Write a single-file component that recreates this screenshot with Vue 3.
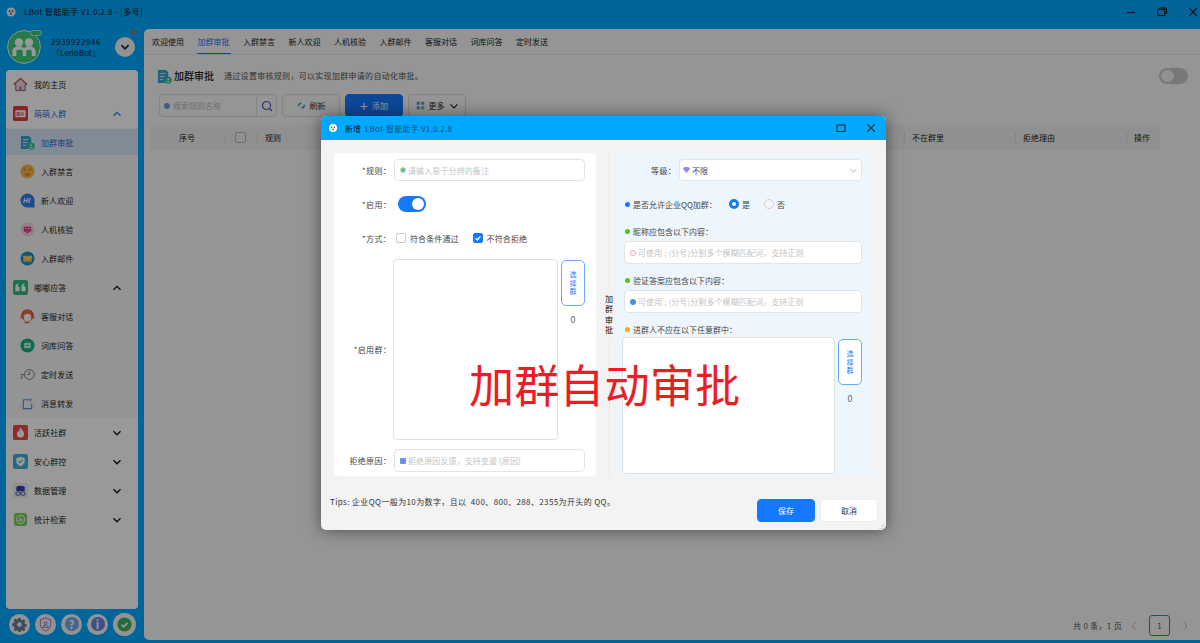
<template>
  <div class="app">
    <div class="titlebar">
      <svg class="logo" viewBox="0 0 12 12"><circle cx="6" cy="6" r="5.4" fill="#f2f2f2"/><circle cx="4.2" cy="5" r="1" fill="#444"/><circle cx="7.8" cy="5" r="1" fill="#444"/><ellipse cx="6" cy="8" rx="1" ry="1.3" fill="#444"/></svg>
      <span class="app-title">LBot 智能助手 V1.0.2.8 - [多号]</span>
      <div class="win-btns">
        <svg viewBox="0 0 10 10"><path d="M1 5.5h8" stroke="#111" stroke-width="1.2"/></svg>
        <svg viewBox="0 0 10 10" fill="none" stroke="#111"><rect x=".8" y="2.5" width="7" height="6"/><path d="M2.5 2.5V1h7v5.5H8"/></svg>
        <svg viewBox="0 0 10 10"><path d="M1.2 1.2l7.6 7.6M8.8 1.2L1.2 8.8" stroke="#111" stroke-width="1.1"/></svg>
      </div>
    </div>

    <div class="shell">
      <aside class="side">
        <div class="account">
          <div class="avatar">
            <svg viewBox="0 0 34 34"><circle cx="17" cy="17" r="16.4" fill="#3dcb7a" stroke="#e8f2f2"/><g fill="#fff"><circle cx="12" cy="12.5" r="4.2"/><circle cx="22" cy="12.5" r="4.2"/><path d="M5.5 26v-4.5c0-3.4 2.6-5 5.5-5h2c1.700 0 3 .6 4 1.600 1-1 2.300-1.600 4-1.600h2c2.900 0 5.500 1.600 5.500 5V26h-3.800v-4.500c0-1.200-.8-1.800-2-1.800h-1.500c-1.300 0-2 .7-2 1.800V26h-3.400v-4.500c0-1.200-.7-1.800-2-1.800H11.300c-1.200 0-2 .6-2 1.800V26z"/></g></svg>
            <span class="tag"></span>
          </div>
          <div class="acc-text">
            <div>2939922946</div>
            <div class="acc-name">『LerioBot』</div>
          </div>
          <button class="acc-btn">
            <svg viewBox="0 0 10 10"><path d="M2 3.500l3 3 3-3" fill="none" stroke="#222" stroke-width="1.400"/></svg>
          </button>
          <i class="red-dot"></i>
        </div>

        <nav class="menu">
          <template v-for="m in menu" :key="m.name">
            <div class="row" :class="{ sub: m.sub, active: m.active, open: m.open, bluehead: m.blue, shade: m.shade }">
              <svg class="ico" viewBox="0 0 16 16" v-html="icons[m.icon]"></svg>
              <span>{{ m.name }}</span>
              <svg v-if="m.arrow" class="arrow" viewBox="0 0 10 10"><path :d="m.arrow === 'up' ? 'M1.500 6.800L5 3.300l3.500 3.500' : 'M1.500 3.300L5 6.800l3.500-3.500'" fill="none" :stroke="m.blue ? '#2f7fe0' : '#111'" stroke-width="1.300"/></svg>
            </div>
          </template>
        </nav>

        <div class="tools">
          <span class="tool"><svg viewBox="0 0 16 16"><path fill="#6c7f9c" d="M6.800 1h2.400l.4 1.900 1.300.6 1.700-1 1.700 1.700-1 1.700.6 1.300 1.900.4v2.400l-1.900.4-.6 1.300 1 1.700-1.700 1.700-1.700-1-1.300.6-.4 1.900H6.800l-.4-1.900-1.300-.6-1.700 1-1.700-1.700 1-1.700-.6-1.300L.2 9.200V6.800l1.900-.4.6-1.300-1-1.700 1.700-1.700 1.700 1 1.300-.6zM8 5.600a2.400 2.400 0 100 4.800 2.400 2.400 0 000-4.800z"/></svg></span>
          <span class="tool"><svg viewBox="0 0 16 16" fill="none" stroke="#9b6dc0"><path d="M8 1l5.500 2v5c0 3.500-2.500 5.500-5.500 7-3-1.500-5.500-3.500-5.500-7V3z"/><circle cx="8" cy="6.500" r="1.500"/><path d="M5 11c.3-1.800 1.400-2.500 3-2.500s2.700.7 3 2.500z"/></svg></span>
          <span class="tool blue"><span>?</span></span>
          <span class="tool indigo"><span>i</span></span>
          <span class="tool big"><svg viewBox="0 0 16 16"><circle cx="8" cy="8" r="7.500" fill="#3fb55b"/><path d="M4.700 8.300l2.300 2.200 4.300-4.300" fill="none" stroke="#fff" stroke-width="1.700"/></svg></span>
        </div>
      </aside>

      <main class="main">
        <div class="tabs">
          <span v-for="t in tabs" :key="t" class="tab" :class="{ on: t === '加群审批' }">{{ t }}</span>
        </div>

        <div class="head">
          <svg class="head-ico" viewBox="0 0 16 16" v-html="icons.doc"></svg>
          <span class="head-title">加群审批</span>
          <span class="head-desc">通过设置审核规则，可以实现加群申请的自动化审批。</span>
          <span class="big-switch"><i></i></span>
        </div>

        <div class="toolbar">
          <div class="search">
            <span class="search-in"><i class="dot-ph"></i>搜索规则名称</span>
            <span class="search-btn"><svg viewBox="0 0 12 12" fill="none" stroke="#4b50c8" stroke-width="1.200"><circle cx="5.500" cy="5.500" r="4"/><path d="M8.500 8.500l2.500 2.500"/></svg></span>
          </div>
          <button class="tb-btn"><svg viewBox="0 0 12 12" fill="none" stroke-width="1.800"><path d="M2 7a4 4 0 014-4" stroke="#28b48c"/><path d="M10 5a4 4 0 01-4 4" stroke="#3b82d0"/></svg>刷新</button>
          <button class="tb-btn primary"><span class="plus">+</span>添加</button>
          <button class="tb-btn"><svg viewBox="0 0 12 12"><path fill="#5b8fd8" d="M1 1h4v4H1zM7 1h4v4H7zM1 7h4v4H1z"/><path fill="#4fc3a1" d="M7 7h4v4H7z"/></svg>更多<svg class="more-arrow" viewBox="0 0 10 10"><path d="M1.500 3.300L5 6.800l3.500-3.500" fill="none" stroke="#222" stroke-width="1.200"/></svg></button>
        </div>

        <div class="thead">
          <span class="th c-no">序号</span>
          <span class="th c-check"><i class="box"></i></span>
          <span class="th c-rule">规则</span>
          <span class="th c-a">不在群里</span>
          <span class="th c-b">拒绝理由</span>
          <span class="th c-c">操作</span>
        </div>

        <div class="pager">
          <span>共 0 条，1 页</span>
          <svg viewBox="0 0 10 10"><path d="M6.500 1.500L3 5l3.500 3.500" fill="none" stroke="#bbb"/></svg>
          <b>1</b>
          <svg viewBox="0 0 10 10"><path d="M3.500 1.500L7 5 3.500 8.500" fill="none" stroke="#bbb"/></svg>
        </div>
      </main>
    </div>

    <div class="mask"></div>

    <section class="dialog">
      <header class="dlg-bar">
        <svg class="dlg-logo" viewBox="0 0 12 12"><circle cx="6" cy="6" r="4.800" fill="#fff"/><circle cx="4.400" cy="5.200" r=".9" fill="#456"/><circle cx="7.600" cy="5.200" r=".9" fill="#456"/><ellipse cx="6" cy="7.800" rx=".9" ry="1.100" fill="#456"/></svg>
        <span class="dlg-title">新增</span>
        <span class="dlg-sub">LBot-智能助手 V1.0.2.8</span>
        <svg class="dlg-ctl" viewBox="0 0 10 10"><path d="M1 2h8v6.500H1z" fill="none" stroke="#0b2030" stroke-width="1.200"/></svg>
        <svg class="dlg-ctl last" viewBox="0 0 10 10"><path d="M1.200 1.200l7.600 7.600M8.800 1.200L1.200 8.800" stroke="#0b2030" stroke-width="1.100"/></svg>
      </header>

      <div class="dlg-body">
        <div class="card left">
          <div class="f r1">
            <label>*规则：</label>
            <div class="input"><i class="ph-dot cyan"></i>请输入易于分辨的备注</div>
          </div>
          <div class="f r2">
            <label>*启用：</label>
            <span class="sw"><i></i></span>
          </div>
          <div class="f r3">
            <label>*方式：</label>
            <span class="chk"><i class="cb"></i>符合条件通过</span>
            <span class="chk"><i class="cb on"><svg viewBox="0 0 10 10"><path d="M2 5.200l2.200 2.200L8 3" fill="none" stroke="#fff" stroke-width="1.700"/></svg></i>不符合拒绝</span>
          </div>
          <div class="f r4">
            <label>*启用群：</label>
            <div class="groupbox"></div>
            <div class="pick">
              <button class="pick-btn">选择群</button>
              <span>0</span>
            </div>
          </div>
          <div class="f r5">
            <label>拒绝原因：</label>
            <div class="input"><i class="ph-dot sq"></i>拒绝原因反馈，支持变量 {原因}</div>
          </div>
        </div>

        <div class="split"><span>加群审批</span></div>

        <div class="card right">
          <div class="f r1 lv">
            <label>等级：</label>
            <div class="input sel"><i class="gem"></i>不限<svg viewBox="0 0 10 10"><path d="M1.500 3.300L5 6.800l3.500-3.500" fill="none" stroke="#aaa"/></svg></div>
          </div>
          <div class="radio-row">
            <i class="bullet" style="background:#1677ff"></i>
            <span class="q">是否允许企业QQ加群：</span>
            <span class="rd"><i class="ra on"></i>是</span>
            <span class="rd"><i class="ra"></i>否</span>
          </div>
          <div class="lab"><i class="bullet" style="background:#52c41a"></i>昵称应包含以下内容：</div>
          <div class="input wide"><i class="ph-dot pink"></i>可使用 ; (分号)分割多个模糊匹配词，支持正则</div>
          <div class="lab l2"><i class="bullet" style="background:#52c41a"></i>验证答案应包含以下内容：</div>
          <div class="input wide"><i class="ph-dot blue"></i>可使用 ; (分号)分割多个模糊匹配词，支持正则</div>
          <div class="lab l3"><i class="bullet" style="background:#faad14"></i>进群人不应在以下任意群中：</div>
          <div class="r6">
            <div class="groupbox"></div>
            <div class="pick">
              <button class="pick-btn">选择群</button>
              <span>0</span>
            </div>
          </div>
        </div>
      </div>

      <footer class="dlg-foot">
        <span class="tips">Tips: 企业QQ一般为10为数字，且以&nbsp; 400、800、288、2355为开头的 QQ。</span>
        <button class="btn save">保存</button>
        <button class="btn">取消</button>
      </footer>

      <svg class="grip" viewBox="0 0 6 6"><path d="M5 1v.8M3 3v.8M5 3v.8M1 5v.8M3 5v.8M5 5v.8" stroke="#aaa"/></svg>
    </section>

    <div class="watermark">加群自动审批</div>
  </div>
</template>

<script setup>
const tabs = ['欢迎使用', '加群审批', '入群禁言', '新人欢迎', '人机核验', '入群邮件', '客服对话', '词库问答', '定时发送']

const menu = [
  { name: '我的主页', icon: 'home' },
  { name: '萌萌入群', icon: 'card', arrow: 'up', blue: true, open: true },
  { name: '加群审批', icon: 'doc', sub: true, active: true },
  { name: '入群禁言', icon: 'face', sub: true },
  { name: '新人欢迎', icon: 'hi', sub: true },
  { name: '人机核验', icon: 'robot', sub: true },
  { name: '入群邮件', icon: 'mail', sub: true },
  { name: '嘟嘟应答', icon: 'quote', arrow: 'up', shade: true },
  { name: '客服对话', icon: 'service', sub: true },
  { name: '词库问答', icon: 'lib', sub: true },
  { name: '定时发送', icon: 'clock', sub: true },
  { name: '消息转发', icon: 'forward', sub: true },
  { name: '活跃社群', icon: 'fire', arrow: 'down' },
  { name: '安心群控', icon: 'shield', arrow: 'down' },
  { name: '数据管理', icon: 'data', arrow: 'down' },
  { name: '统计检索', icon: 'stat', arrow: 'down' }
]

const icons = {
  home: '<path d="M8 1.500L1 8h2v6.500h10V8h2z" fill="#e8d8e0" stroke="#7a5a78"/><path d="M6.500 14.500V10h3v4.500z" fill="#b88"/><path d="M1 8l7-6.500L15 8" fill="none" stroke="#c0605a" stroke-width="1.300"/>',
  card: '<rect width="16" height="16" rx="2" fill="#e33d3d"/><rect x="2.500" y="4.500" width="11" height="7.500" rx="1" fill="#fff"/><path d="M4.300 7h2.400v3H4.300zM8 7.500h3.500M8 9.500h3.500" fill="none" stroke="#e33d3d"/>',
  doc: '<path d="M1 1h8.500l2.500 2.500v6a5 5 0 00-3.500 5.500H1z" fill="#35a5cc"/><path d="M3 5h6M3 8h5M3 11h3.500" stroke="#e2f4fa"/><circle cx="12" cy="12" r="3.700" fill="#35c690"/><circle cx="12" cy="11" r="1" fill="#fff"/><path d="M10.200 14c.2-1.200 3.400-1.200 3.600 0z" fill="#fff"/>',
  face: '<circle cx="8" cy="8" r="7.500" fill="#f8b644"/><path d="M4 5.500l2 1M12 5.500l-2 1M5.500 11.500h5" stroke="#b2701a" stroke-width="1.200"/><path d="M6.500 9.500h3v3h-3z" fill="#e8923a"/>',
  hi: '<path d="M8 .5a7.500 7.500 0 100 15h7.500V8A7.500 7.500 0 008 .5z" fill="#2f80e8"/><text x="3.200" y="11" font-size="7.500" font-weight="700" font-style="italic" fill="#fff" font-family="Liberation Sans">HI</text>',
  robot: '<circle cx="8" cy="8" r="7.500" fill="#f7d3e3"/><rect x="4" y="5" width="8" height="5.500" rx="1" fill="#d8408c"/><path d="M5.500 7h1.500M9 7h1.500" stroke="#fff"/><path d="M6 10.500L8 12.500l2-2" fill="#d8408c"/>',
  mail: '<circle cx="8" cy="8" r="7.500" fill="#1b92c9"/><rect x="3.500" y="5" width="9" height="6.500" rx=".6" fill="#f5c84a"/><path d="M3.500 5.500L8 8.800l4.500-3.300" fill="none" stroke="#fff" stroke-width=".9"/>',
  quote: '<rect width="16" height="16" rx="2.500" fill="#2dbb7d"/><path d="M2.500 7c0-1.800 1.200-3 3-3.300v1.700C5 5.600 4.700 6.100 4.700 7h2.300v5H2.500zM9 7c0-1.800 1.200-3 3-3.300v1.700c-.6.200-.8.700-.8 1.600h2.300v5H9z" fill="#fff"/>',
  service: '<circle cx="8" cy="7.500" r="6" fill="#f0663a"/><circle cx="8" cy="9" r="4" fill="#fff"/><path d="M2 8.500V7a6 6 0 0112 0v1.500" fill="none" stroke="#d84a2a" stroke-width="1.400"/><circle cx="2" cy="9" r="1.400" fill="#f0663a"/><circle cx="14" cy="9" r="1.400" fill="#f0663a"/><path d="M6.200 9h.1M9.700 9h.1" stroke="#555"/><path d="M5 14.500h5" stroke="#f0663a" stroke-width="1.300"/>',
  lib: '<circle cx="8" cy="8" r="7.500" fill="#15b083"/><rect x="4.500" y="5" width="7" height="6" rx=".8" fill="#c9f0e2"/><path d="M6.500 8h3" stroke="#15b083"/>',
  clock: '<text x="-.5" y="12.500" font-size="8.500" font-weight="700" fill="#3f9fb0" font-family="Liberation Sans">7</text><circle cx="10" cy="8" r="5.200" fill="none" stroke="#666" stroke-width=".9"/><path d="M10 4.800V8H7.500" fill="none" stroke="#666" stroke-width=".9"/>',
  forward: '<path d="M3.500 4h6M3.500 4v9.500h9V8" fill="none" stroke="#5d8bd8" stroke-width="1.200"/><path d="M11 2v4M9 4h4" stroke="#7aa3e0"/><path d="M0 11h2M14 11h2" stroke="#b7cde9"/>',
  fire: '<rect width="16" height="16" rx="2" fill="#ea4a4a"/><path d="M8 2.500c.5 2 3.800 3.800 3.800 7a3.800 3.800 0 01-7.600 0c0-1.500.7-2.400 1.500-3.300.1 1 .4 1.600 1 2C6.400 6 7 4 8 2.500z" fill="#fff"/>',
  shield: '<rect width="16" height="16" rx="2.500" fill="#3cb2d8"/><path d="M8 3l4.500 1.500V8c0 2.500-2 4-4.500 5-2.500-1-4.500-2.500-4.500-5V4.500z" fill="#fff"/><path d="M6 7.500l1.500 1.500L10.300 6.300" fill="none" stroke="#3cb2d8" stroke-width="1.100"/>',
  data: '<rect width="16" height="16" rx="2.500" fill="#eceef6"/><ellipse cx="8" cy="4.800" rx="4.500" ry="2" fill="#2d3fa8"/><path d="M3.500 5.500v2.500c0 1.100 9 1.100 9 0V5.500" fill="#2d3fa8"/><rect x="3" y="9.500" width="4.500" height="3.500" rx="1.500" fill="none" stroke="#2d3fa8"/><rect x="8.500" y="9.500" width="4.500" height="3.500" rx="1.500" fill="none" stroke="#2d3fa8"/>',
  stat: '<rect x="1" y="1" width="14" height="14" rx="3" fill="#7fcf5a"/><circle cx="8" cy="8" r="4.300" fill="none" stroke="#fff"/><path d="M6.300 10V8M8 10V6M9.700 10V7.500" stroke="#fff"/>'
}
</script>

<style>
html, body {
  margin: 0;
  padding: 0;
  overflow: hidden;
}
</style>

<style scoped>
* {
  box-sizing: border-box;
}

.app {
  position: relative;
  width: 1200px;
  height: 643px;
  overflow: hidden;
  background: #00a9ff;
  font-family: "Noto Sans CJK SC", "Noto Sans", sans-serif;
  font-size: 8px;
  color: #333;
}

button {
  font-family: inherit;
  font-size: 8px;
  cursor: pointer;
}

.titlebar {
  display: flex;
  align-items: center;
  height: 23px;
  padding-left: 6px;
}

.logo {
  width: 10px;
  height: 10px;
  margin-right: 8px;
}

.app-title {
  color: #111;
  font-size: 8px;
  letter-spacing: .38px;
}

.win-btns {
  display: flex;
  gap: 21px;
  margin-left: auto;
  padding-right: 2px;
}

.win-btns svg {
  width: 10px;
  height: 10px;
}

.shell {
  display: flex;
  height: 617px;
}

.side {
  display: flex;
  flex-direction: column;
  width: 144px;
  flex: none;
  padding-left: 6px;
  padding-right: 6px;
}

.account {
  position: relative;
  display: flex;
  align-items: center;
  height: 47px;
  padding-left: 1px;
  padding-top: 1px;
}

.avatar {
  position: relative;
  width: 34px;
  height: 34px;
}

.avatar svg {
  display: block;
}

.tag {
  position: absolute;
  right: -1px;
  top: 0;
  width: 12px;
  height: 6px;
  border-radius: 3px;
  background: #35c971;
  border: 1px solid #cde;
}

.acc-text {
  width: 66px;
  margin-left: 2px;
  text-align: center;
  line-height: 11px;
  color: #0b2030;
  font-size: 8px;
  letter-spacing: .55px;
}

.acc-name {
  letter-spacing: 0;
}

.acc-btn {
  width: 20px;
  height: 20px;
  margin-left: 6px;
  padding: 4px;
  border: none;
  border-radius: 50%;
  background: #f5f5f5;
}

.acc-btn svg {
  display: block;
  width: 12px;
  height: 12px;
}

.red-dot {
  position: absolute;
  right: 2px;
  top: 7px;
  width: 4px;
  height: 4px;
  border-radius: 50%;
  background: #f05050;
}

.menu {
  flex: none;
  height: 539px;
  background: #fff;
  border-radius: 4px;
  overflow: hidden;
}

.row {
  display: flex;
  align-items: center;
  height: 29px;
  padding-left: 7px;
  color: #222;
  font-size: 8px;
  letter-spacing: .1px;
}

.row .ico {
  width: 15px;
  height: 15px;
  margin-right: 6px;
  flex: none;
}

.row.sub {
  padding-left: 14px;
  background: #f7f7f7;
}

.row.shade {
  background: #f7f7f7;
}

.row.active {
  border-top: 1px solid #f7f7f7;
  border-bottom: 2px solid #f7f7f7;
  background: #d6e8f8;
  color: #1668dc;
}

.bluehead {
  color: #1668dc;
}

.arrow {
  width: 10px;
  height: 10px;
  margin-left: auto;
  margin-right: 16px;
}

.tools {
  display: flex;
  align-items: center;
  gap: 5px;
  height: 30px;
  padding-left: 3px;
}

.tool {
  display: flex;
  align-items: center;
  justify-content: center;
  width: 21px;
  height: 21px;
  border-radius: 50%;
  background: #f5f5f5;
}

.tool svg {
  width: 15px;
  height: 15px;
}

.tool span {
  display: block;
  width: 14px;
  height: 14px;
  border-radius: 50%;
  text-align: center;
  line-height: 14px;
  color: #fff;
  font-size: 11px;
  font-weight: 700;
}

.tool.blue span {
  background: #72a8ea;
}

.tool.indigo span {
  background: #6a85e0;
}

.tool.big {
  width: 23px;
  height: 23px;
}

.main {
  position: relative;
  flex: 1;
  height: 611px;
  margin-top: 6px;
  background: #f8f8f8;
  border-radius: 5px 0 0 5px;
}

.tabs {
  display: flex;
  gap: 13.500px;
  height: 26px;
  padding-left: 8px;
  border-bottom: 1px solid #e4e4e4;
}

.tab {
  position: relative;
  line-height: 25px;
  color: #222;
  font-size: 8px;
}

.tab.on {
  color: #1677ff;
}

.tab.on::after {
  content: "";
  position: absolute;
  left: -1px;
  right: -1px;
  bottom: 0;
  height: 1px;
  background: #1677ff;
}

.head {
  display: flex;
  align-items: center;
  height: 24px;
  margin-top: 9px;
  padding-left: 13px;
  padding-right: 12px;
}

.head-ico {
  width: 15px;
  height: 15px;
  margin-right: 2px;
}

.head-title {
  font-size: 10px;
  color: #222;
  font-weight: 500;
  margin-top: -1px;
}

.head-desc {
  margin-left: 10px;
  margin-top: -1px;
  color: #555;
  font-size: 8px;
  letter-spacing: .3px;
}

.big-switch {
  display: block;
  width: 29px;
  height: 16px;
  margin-left: auto;
  padding: 2px;
  border-radius: 8px;
  background: #c8c8c8;
}

.big-switch i {
  display: block;
  width: 13px;
  height: 12px;
  border-radius: 50%;
  background: #f2f2f2;
}

.toolbar {
  display: flex;
  gap: 5px;
  height: 23px;
  margin-top: 6px;
  padding-left: 15px;
}

.search {
  display: flex;
  width: 118px;
  height: 23px;
  border: 1px solid #ddd;
  border-radius: 4px;
  background: #f8f8f8;
}

.search-in {
  display: flex;
  align-items: center;
  flex: 1;
  padding-left: 4px;
  color: #b8b8b8;
}

.dot-ph {
  width: 6px;
  height: 6px;
  margin-right: 3px;
  border-radius: 50%;
  background: #6a9bdc;
}

.search-btn {
  display: flex;
  align-items: center;
  justify-content: center;
  width: 20px;
  border-left: 1px solid #ddd;
}

.search-btn svg {
  width: 12px;
  height: 12px;
}

.tb-btn {
  display: flex;
  align-items: center;
  justify-content: center;
  gap: 4px;
  width: 58px;
  height: 23px;
  padding: 0;
  border: 1px solid #ddd;
  border-radius: 4px;
  background: #f8f8f8;
  color: #333;
}

.tb-btn svg {
  width: 9px;
  height: 9px;
}

.tb-btn .more-arrow {
  width: 10px;
  height: 10px;
}

.tb-btn.primary {
  border-color: #1677ff;
  background: #1677ff;
  color: #fff;
}

.plus {
  font-size: 14px;
  line-height: 12px;
}

.thead {
  display: flex;
  align-items: center;
  height: 25px;
  width: 1010px;
  margin-top: 8px;
  margin-left: 6px;
  background: #f1f1f1;
}

.th {
  color: #222;
  white-space: nowrap;
}

.c-no {
  width: 75px;
  padding-left: 29px;
}

.c-check {
  display: flex;
  align-items: center;
  width: 32px;
  height: 10px;
  padding-left: 9px;
  border-left: 1px solid #ddd;
}

.box {
  display: block;
  width: 11px;
  height: 11px;
  border: 1px solid #bbb;
  border-radius: 2px;
}

.c-rule {
  width: 647px;
  padding-left: 7px;
  border-left: 1px solid #ddd;
}

.c-a, .c-b {
  width: 111px;
  padding-left: 7px;
  border-left: 1px solid #ddd;
}

.c-c {
  padding-left: 7px;
  border-left: 1px solid #ddd;
}

.pager {
  position: absolute;
  right: 10px;
  bottom: 4px;
  display: flex;
  align-items: center;
  gap: 7px;
  color: #555;
  letter-spacing: .3px;
}

.pager svg {
  width: 10px;
  height: 10px;
}

.pager b {
  display: block;
  width: 21px;
  height: 21px;
  margin: 0 3px;
  border: 1px solid #2f7fe0;
  border-radius: 3px;
  text-align: center;
  line-height: 19px;
  font-weight: 400;
}

.mask {
  position: absolute;
  inset: 0;
  background: rgba(0, 0, 0, .4);
}

.dialog {
  position: absolute;
  left: 321px;
  top: 116px;
  display: flex;
  flex-direction: column;
  width: 565px;
  height: 414px;
  border-radius: 5px;
  overflow: hidden;
  background: #f3f3f3;
  box-shadow: 0 0 16px rgba(0, 0, 0, .5);
}

.dlg-bar {
  display: flex;
  align-items: center;
  flex: none;
  height: 24px;
  padding-left: 7px;
  background: #00a9ff;
}

.dlg-logo {
  width: 10px;
  height: 10px;
  margin-right: 7px;
}

.dlg-title {
  color: #0b2030;
}

.dlg-sub {
  margin-left: 4px;
  color: #0a4e80;
  letter-spacing: .25px;
}

.dlg-ctl {
  width: 10px;
  height: 10px;
  margin-left: auto;
  margin-right: 20px;
}

.dlg-ctl.last {
  margin-left: 0;
  margin-right: 10px;
}

.dlg-body {
  display: flex;
  flex: none;
  height: 323px;
  margin-top: 13px;
  padding-left: 13px;
}

.card {
  height: 323px;
  border-radius: 4px;
}

.card.left {
  width: 262px;
  padding-top: 6px;
  background: #fff;
}

.card.right {
  width: 255px;
  padding-top: 6px;
  background: #eef6fd;
}

.split {
  position: relative;
  display: flex;
  align-items: center;
  width: 22px;
  padding-left: 8px;
}

.split::before {
  content: "";
  position: absolute;
  left: 13px;
  top: 0;
  bottom: 0;
  border-left: 1px solid #e8e8e8;
}

.split span {
  position: relative;
  width: 10px;
  padding: 3px 0;
  background: #f3f3f3;
  text-align: center;
  line-height: 10.500px;
  color: #111;
}

.f {
  display: flex;
  align-items: center;
}

.f label {
  flex: none;
  width: 57px;
  margin-right: 3px;
  text-align: right;
  color: #444;
  letter-spacing: .3px;
}

.input {
  display: flex;
  align-items: center;
  height: 22px;
  padding-left: 5px;
  border: 1px solid #e4e4e4;
  border-radius: 4px;
  background: #fff;
  color: #c4c4c4;
  letter-spacing: .1px;
}

.ph-dot {
  flex: none;
  width: 6px;
  height: 6px;
  margin-right: 2px;
  border-radius: 50%;
}

.ph-dot.cyan {
  background: #45b8e8;
  border: 1px solid #e8d060;
}

.ph-dot.sq {
  border-radius: 1px;
  background: #6a8fe8;
}

.ph-dot.pink {
  background: #fff;
  border: 1px solid #f0a0b0;
}

.ph-dot.blue {
  background: #4a90e8;
}

.r1 {
  height: 22px;
  margin-bottom: 15px;
}

.r1 .input {
  width: 191px;
}

.r2 {
  height: 16px;
  margin-bottom: 17px;
}

.sw {
  display: flex;
  justify-content: flex-end;
  width: 28px;
  height: 16px;
  margin-left: 4px;
  padding: 2px;
  border-radius: 8px;
  background: #1677ff;
}

.sw i {
  display: block;
  width: 12px;
  height: 12px;
  border-radius: 50%;
  background: #fff;
}

.r3 {
  height: 18px;
  margin-bottom: 12px;
}

.chk {
  display: flex;
  align-items: center;
  margin-left: 2px;
  margin-right: 12px;
  color: #444;
  letter-spacing: .1px;
}

.cb {
  display: block;
  width: 10px;
  height: 10px;
  margin-right: 4px;
  border: 1px solid #c8c8c8;
  border-radius: 2px;
}

.cb.on {
  border-color: #1677ff;
  background: #1677ff;
}

.cb svg {
  display: block;
  width: 8px;
  height: 8px;
}

.r4 {
  align-items: center;
  height: 181px;
  margin-bottom: 9px;
}

.r4 .groupbox {
  width: 165px;
  height: 181px;
  margin-left: -1px;
}

.groupbox {
  flex: none;
  border: 1px solid #e0e0e0;
  border-radius: 4px;
  background: #fff;
}

.pick {
  align-self: flex-start;
  display: flex;
  flex-direction: column;
  align-items: center;
  gap: 7px;
  width: 24px;
  margin-top: 1px;
  margin-left: 3px;
  color: #666;
  font-size: 9px;
}

.pick-btn {
  width: 24px;
  height: 46px;
  padding: 0 7.500px;
  border: 1px solid #69a8ff;
  border-radius: 5px;
  background: #fff;
  color: #1677ff;
  line-height: 8.500px;
  font-size: 7px;
}

.r5 {
  height: 23px;
}

.r5 .input {
  width: 191px;
  height: 23px;
}

.lv label {
  width: 58px;
}

.sel {
  position: relative;
  width: 183px !important;
  padding-left: 3px;
  color: #444;
}

.sel svg {
  width: 9px;
  height: 9px;
  margin-left: auto;
  margin-right: 3px;
}

.gem {
  width: 7px;
  height: 6px;
  margin-right: 2px;
  clip-path: polygon(20% 0, 80% 0, 100% 35%, 50% 100%, 0 35%);
  background: #9a84e8;
}

.radio-row {
  display: flex;
  align-items: center;
  height: 16px;
  margin-top: 0;
  padding-left: 7px;
  color: #444;
}

.bullet {
  flex: none;
  width: 5px;
  height: 5px;
  margin-right: 3px;
  border-radius: 50%;
}

.q {
  margin-right: 12px;
}

.rd {
  display: flex;
  align-items: center;
  margin-right: 14px;
}

.ra {
  display: block;
  width: 10px;
  height: 10px;
  margin-right: 3px;
  border: 1px solid #d0d0d0;
  border-radius: 50%;
  background: #f6f6f6;
}

.ra.on {
  border: 3px solid #1677ff;
  background: #fff;
}

.lab {
  display: flex;
  align-items: center;
  height: 12px;
  margin-top: 13px;
  margin-bottom: 4px;
  padding-left: 7px;
  color: #444;
}

.lab.l2 {
  margin-top: 10px;
  margin-bottom: 4px;
}

.lab.l3 {
  margin-top: 10px;
  margin-bottom: 2px;
}

.input.wide {
  width: 238px;
  height: 23px;
  margin-left: 6px;
}

.r6 {
  display: flex;
  padding-left: 4px;
}

.r6 .groupbox {
  width: 213px;
  height: 137px;
}

.r6 .pick {
  margin-top: 2px;
}

.dlg-foot {
  display: flex;
  align-items: flex-start;
  flex: 1;
  padding-left: 9px;
  padding-right: 8px;
}

.tips {
  margin-top: 20px;
  margin-right: auto;
  color: #333;
  letter-spacing: .38px;
}

.btn {
  width: 58px;
  height: 23px;
  margin-top: 23px;
  margin-left: 5px;
  border: 1px solid #eee;
  border-radius: 4px;
  background: #fff;
  color: #333;
}

.btn.save {
  border-color: #1677ff;
  background: #1677ff;
  color: #fff;
}

.grip {
  position: absolute;
  right: 1px;
  bottom: 1px;
  width: 6px;
  height: 6px;
}

.watermark {
  position: absolute;
  left: 469px;
  top: 354px;
  color: #ee1c25;
  font-size: 45.200px;
  line-height: 60px;
  white-space: nowrap;
}
</style>
